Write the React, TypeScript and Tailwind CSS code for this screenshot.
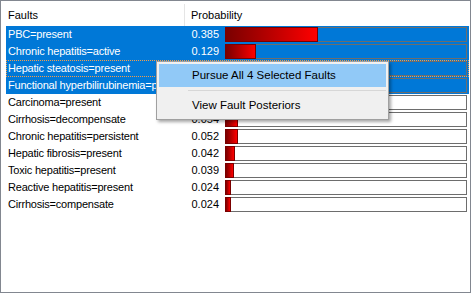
import React from 'react';

type Fault = { name: string; p: number; selected?: boolean; focused?: boolean };

const faults: Fault[] = [
  { name: 'PBC=present', p: 0.385, selected: true },
  { name: 'Chronic hepatitis=active', p: 0.129, selected: true },
  { name: 'Hepatic steatosis=present', p: 0.121, selected: true, focused: true },
  { name: 'Functional hyperbilirubinemia=present', p: 0.105, selected: true },
  { name: 'Carcinoma=present', p: 0.061 },
  { name: 'Cirrhosis=decompensate', p: 0.054 },
  { name: 'Chronic hepatitis=persistent', p: 0.052 },
  { name: 'Hepatic fibrosis=present', p: 0.042 },
  { name: 'Toxic hepatitis=present', p: 0.039 },
  { name: 'Reactive hepatitis=present', p: 0.024 },
  { name: 'Cirrhosis=compensate', p: 0.024 },
];

const BOX_W = 242;

function Row({ f }: { f: Fault }) {
  return (
    <div
      className={
        'ml-[5px] mr-[1px] flex h-[17px] items-center pr-[2px] ' +
        (f.selected ? 'bg-[#0078d7] text-white ' : 'text-black ') +
        (f.focused ? 'outline-1 -outline-offset-1 outline-dotted outline-[#f3a04c]' : '')
      }
    >
      <div className="w-[179px] overflow-hidden whitespace-nowrap pl-[2px] leading-[17px] tracking-[-0.2px]">
        {f.name}
      </div>
      <div className="w-[36px] pr-[2px] text-right leading-[17px]">{f.p.toFixed(3)}</div>
      <div
        className={
          'relative ml-[4px] h-[15px] flex-1 border border-[#6d6d6d] ' +
          (f.selected ? '' : 'bg-white')
        }
      >
        <div
          className="absolute -top-px -bottom-px -left-px border border-[#7a0000] bg-linear-to-r from-[#7a0000] to-[#ff0000]"
          style={{ width: Math.max(5, Math.round(f.p * BOX_W)) }}
        />
      </div>
    </div>
  );
}

export default function App() {
  return (
    <div
      className="relative h-[293px] w-[471px] overflow-hidden border border-[#828790] bg-white text-[11px]"
      style={{ fontFamily: '"Liberation Sans", Arial, sans-serif' }}
    >
      <div className="flex h-[25px] items-center pt-[3px] text-black">
        <div className="w-[184px] border-r border-[#e5e5e5] pl-[7px] leading-[22px]">Faults</div>
        <div className="pl-[6px] leading-[22px]">Probability</div>
      </div>
      <div className="flex flex-col">
        {faults.map((f) => (
          <Row key={f.name} f={f} />
        ))}
      </div>

      {/* context menu */}
      <div className="absolute left-[155px] top-[60px] w-[233px] border border-[#a0a0a0] bg-[#f0f0f0] p-[2px] text-black shadow-[2px_2px_3px_rgba(0,0,0,0.35)]">
        <div className="flex h-[23px] items-center bg-[#91c9f7] pl-[33px] text-[11.5px]">Pursue All 4 Selected Faults</div>
        <div className="flex h-[7px] items-center pl-[29px]">
          <div className="h-px flex-1 bg-[#d7d7d7]" />
        </div>
        <div className="flex h-[23px] items-center pl-[33px] text-[11.5px]">View Fault Posteriors</div>
      </div>
    </div>
  );
}
